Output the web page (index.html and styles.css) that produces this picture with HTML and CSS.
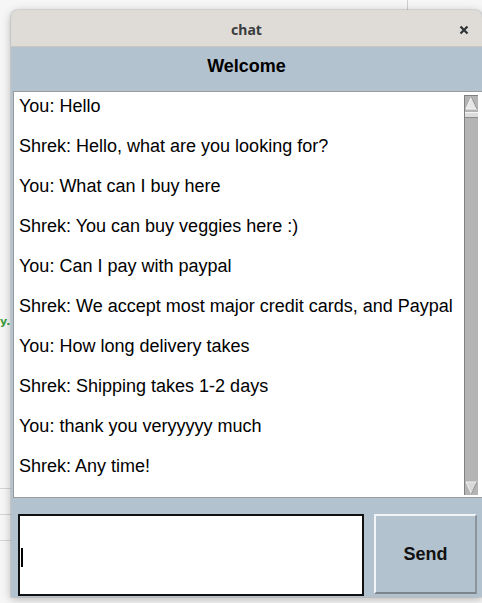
FILE: index.html
```html
<!DOCTYPE html>
<html>
<head>
<meta charset="utf-8">
<link rel="stylesheet" href="styles.css">
</head>
<body>
<div class="desktop">
  <div class="bg-line bl1"></div>
  <div class="bg-line bl2"></div>
  <div class="bg-line bl3"></div>
  <div class="bg-vline"></div>
  <span class="bg-text">y.</span>
  <div class="window">
    <div class="titlebar">
      <span class="title">chat</span>
      <svg class="close" width="10" height="10" viewBox="0 0 10 10"><path d="M1.5 1.5 L8.5 8.5 M8.5 1.5 L1.5 8.5" stroke="#2e3436" stroke-width="2.2" stroke-linecap="butt"/></svg>
    </div>
    <div class="header">Welcome</div>
    <div class="chat">
      <div class="messages">
        <p>You: Hello</p>
        <p>Shrek: Hello, what are you looking for?</p>
        <p>You: What can I buy here</p>
        <p>Shrek: You can buy veggies here :)</p>
        <p>You: Can I pay with paypal</p>
        <p>Shrek: We accept most major credit cards, and Paypal</p>
        <p>You: How long delivery takes</p>
        <p>Shrek: Shipping takes 1-2 days</p>
        <p>You: thank you veryyyyy much</p>
        <p>Shrek: Any time!</p>
      </div>
      <div class="scrollbar">
        <svg class="arrow" width="13" height="14" viewBox="0 0 13 14"><path d="M6.5 1 L12 13 L1 13 Z" fill="#e6e6e6" stroke="#f8f8f8" stroke-width="1"/><path d="M6.5 1 L12 13" stroke="#8a8a8a" stroke-width="1" fill="none"/></svg>
        <div class="thumb"></div>
        <div class="track"></div>
        <svg class="arrow" width="13" height="14" viewBox="0 0 13 14"><path d="M1 1 L12 1 L6.5 13 Z" fill="#d8d8d8" stroke="#f0f0f0" stroke-width="1"/><path d="M12 1 L6.5 13" stroke="#8a8a8a" stroke-width="1" fill="none"/></svg>
      </div>
    </div>
    <div class="composer">
      <div class="input"><span class="caret"></span></div>
      <button class="send">Send</button>
    </div>
  </div>
</div>
</body>
</html>
```
FILE: styles.css
```css
html, body {
  margin: 0;
  padding: 0;
}
body {
  background: #f6f6f6;
  width: 482px;
  height: 603px;
  overflow: hidden;
}
.desktop {
  position: relative;
  width: 482px;
  height: 603px;
  padding: 10px 0 0 11px;
  box-sizing: border-box;
}
.bg-line {
  position: absolute;
  left: 0;
  width: 11px;
  height: 1px;
  background: #d4d4d4;
}
.bl1 { top: 488px; }
.bl2 { top: 514px; }
.bl3 { top: 540px; }
.bg-vline {
  position: absolute;
  left: 407px;
  top: 0;
  width: 1px;
  height: 10px;
  background: #cfcfcf;
}
.bg-text {
  position: absolute;
  left: 0;
  top: 315px;
  font: bold 11px "DejaVu Sans", sans-serif;
  color: #3a9a3a;
}
.window {
  position: relative;
  width: 471px;
  height: 587px;
  background: #b3c2cf;
  border-radius: 7px 7px 0 0;
  box-shadow: 0 2px 10px rgba(0,0,0,0.28), 0 0 0 1px rgba(0,0,0,0.08);
  display: flex;
  flex-direction: column;
  overflow: hidden;
}
.titlebar {
  height: 37px;
  flex: none;
  background: #dfdcd8;
  border-bottom: 1px solid #c9c5c1;
  display: flex;
  align-items: center;
  justify-content: center;
  position: relative;
  padding-top: 3px;
  box-sizing: border-box;
}
.title {
  font-family: "Noto Sans", sans-serif;
  font-weight: 700;
  font-size: 14px;
  color: #3a3d3e;
}
.close {
  position: absolute;
  left: 448px;
  top: 15px;
}
.header {
  height: 44px;
  flex: none;
  display: flex;
  align-items: center;
  justify-content: center;
  font: bold 18px "Liberation Sans", Arial, sans-serif;
  color: #000;
  padding-bottom: 5px;
  box-sizing: border-box;
}
.chat {
  flex: none;
  height: 407px;
  margin: 0 0 0 2px;
  background: #fff;
  border: 1px solid #9a9a9a;
  border-right: none;
  box-sizing: border-box;
  display: flex;
  position: relative;
}
.messages {
  flex: 1;
  padding: 4px 0 0 5px;
  font: 18px "Liberation Sans", Arial, sans-serif;
  color: #000;
}
.messages p {
  margin: 0;
  height: 40px;
  line-height: 21px;
}
.scrollbar {
  width: 13px;
  margin: 3px 4px 2px 0;
  background: #b4b4b4;
  border-left: 1px solid #808080;
  border-top: 1px solid #808080;
  display: flex;
  flex-direction: column;
}
.arrow {
  display: block;
  flex: none;
}
.thumb {
  height: 4px;
  margin: 2px 0 0 0;
  background: #dcdcdc;
  border-top: 1px solid #f4f4f4;
  border-bottom: 1px solid #8c8c8c;
}
.track {
  flex: 1;
}
.composer {
  flex: 1;
  display: flex;
  padding: 16px 5px 2px 7px;
  gap: 10px;
}
.input {
  width: 346px;
  height: 82px;
  box-sizing: border-box;
  background: #fff;
  border: 2px solid #111;
  display: flex;
  align-items: center;
  padding-left: 1px;
}
.caret {
  width: 2px;
  height: 19px;
  background: #000;
  margin-top: 4px;
}
.send {
  width: 103px;
  height: 80px;
  box-sizing: border-box;
  background: #b3c2cf;
  border: 2px solid;
  border-color: #f2f5f8 #8a949c #7c858c #f2f5f8;
  font: bold 18px "Liberation Sans", Arial, sans-serif;
  color: #111;
  padding: 0;
  margin: 0;
}
```
